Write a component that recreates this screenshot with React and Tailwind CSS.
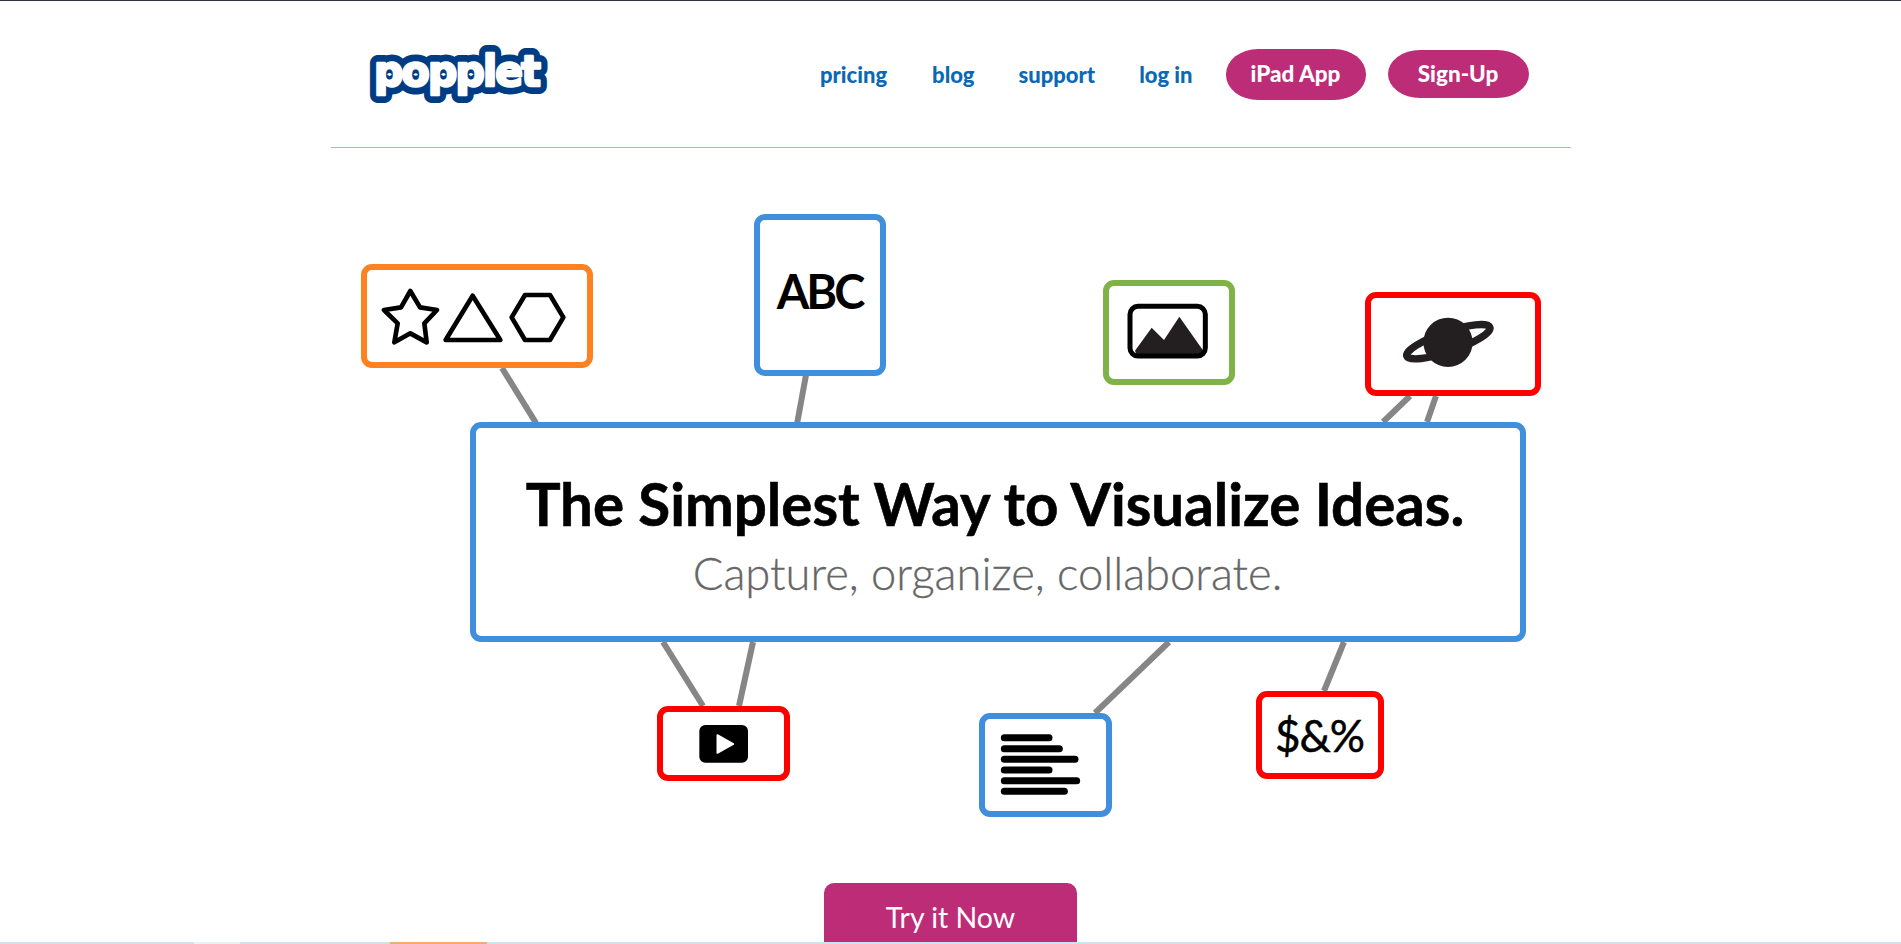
export default function App() {
    const navLink = "text-[#0a68b4] text-[22px] font-black";
    const pinkBtn = "flex items-center justify-center bg-[#bd2c77] text-white text-[22.5px] font-black";

    return (
        <div className="relative h-screen overflow-hidden bg-white border-t border-[#2b3240] font-['Lato',sans-serif]">
            <header className="w-[1240px] h-[147px] mx-auto flex items-center border-b border-[#8fc2d9]">
                <svg className="ml-[34px] w-[190px] h-[66px] font-['DejaVu_Sans',sans-serif] font-bold text-[41px] tracking-[-1.8px]" viewBox="0 0 190 66">
                    <g transform="translate(0 45) scale(1 1.06) translate(0 -45)">
                        <text x="9" y="45" fill="#003c83" stroke="#003c83" strokeWidth="15" strokeLinejoin="round">popplet</text>
                        <text x="9" y="45" fill="#fff" stroke="#fff" strokeWidth="2.5" strokeLinejoin="round">popplet</text>
                    </g>
                </svg>
                <nav className="flex items-center ml-auto mr-[42px]">
                    <a className={navLink}>pricing</a>
                    <a className={`${navLink} ml-[45px]`}>blog</a>
                    <a className={`${navLink} ml-[44px]`}>support</a>
                    <a className={`${navLink} ml-[44px]`}>log in</a>
                    <a className={`${pinkBtn} ml-[33px] w-[140px] h-[51px] rounded-[32px/25px]`}>iPad App</a>
                    <a className={`${pinkBtn} ml-[22px] w-[141px] h-[48px] rounded-[32px/24px]`}>Sign-Up</a>
                </nav>
            </header>

            <div className="relative w-[1240px] h-[735px] mx-auto">
                <svg className="absolute inset-0 w-full h-full" viewBox="0 0 1240 735" fill="none" stroke="#868686" strokeWidth="6">
                    <path d="M171 220L205 275" />
                    <path d="M475 227L466 276" />
                    <path d="M1079 248L1052 274" />
                    <path d="M1105 248L1096 274" />
                    <path d="M332 494L372 558" />
                    <path d="M422 494L408 558" />
                    <path d="M838 494L764 565" />
                    <path d="M1013 494L993 543" />
                </svg>

                {/* shapes */}
                <div className="absolute left-[30px] top-[116px] w-[232px] h-[104px] bg-white border-[6px] border-[#fe8122] rounded-[11px]">
                    <svg className="absolute left-[14px] top-[18px] w-[185px] h-[57px]" viewBox="78 99 555 171" fill="none" stroke="#000" strokeWidth="14" strokeLinejoin="round">
                        <path d="M166 108L195 157L246 165L208 205L215 262L166 235L118 262L128 205L87 165L138 157Z" />
                        <path d="M353 122L436 255L272 255Z" />
                        <path d="M510 120L585 120L625 187L585 255L510 255L470 187Z" />
                    </svg>
                </div>

                {/* text */}
                <div className="absolute left-[423px] top-[66px] w-[132px] h-[162px] bg-white border-[6px] border-[#408fdc] rounded-[11px] flex justify-center pt-[48px] text-[47px] leading-none font-bold tracking-[-3px] text-black">
                    ABC
                </div>

                {/* image */}
                <div className="absolute left-[772px] top-[132px] w-[132px] h-[105px] bg-white border-[6px] border-[#7fb247] rounded-[11px]">
                    <svg className="absolute left-[18px] top-[17px] w-[81px] h-[56px]" viewBox="141 129 243 168">
                        <path d="M165 272L215 203L252 240L298 170L372 275L360 285L170 285Z" fill="#231f20" />
                        <rect x="150" y="139" width="226" height="149" rx="24" fill="none" stroke="#000" strokeWidth="15" />
                    </svg>
                </div>

                {/* planet */}
                <div className="absolute left-[1034px] top-[144px] w-[176px] h-[104px] bg-white border-[6px] border-[#ff0000] rounded-[11px]">
                    <svg className="absolute left-[27px] top-[17px] w-[100px] h-[55px]" viewBox="954 165 300 165">
                        <ellipse cx="1105" cy="245" rx="132" ry="30" fill="none" stroke="#231f20" strokeWidth="22" transform="rotate(-19 1105 245)" />
                        <circle cx="1104" cy="247" r="74" fill="#231f20" />
                    </svg>
                </div>

                {/* main box */}
                <div className="absolute left-[139px] top-[274px] w-[1056px] h-[220px] bg-white border-[6px] border-[#408fdc] rounded-[11px] flex flex-col items-center pt-[46px]">
                    <h1 className="mr-[5px] text-[58.3px] leading-[58px] font-bold text-black [-webkit-text-stroke:0.6px_#000]">The Simplest Way to Visualize Ideas.</h1>
                    <p className="mt-[18px] mr-[20px] text-[45.3px] leading-none font-light text-[#666] [-webkit-text-stroke:0.3px_#666]">Capture, organize, collaborate.</p>
                </div>

                {/* video */}
                <div className="absolute left-[326px] top-[558px] w-[133px] h-[75px] bg-white border-[6px] border-[#ff0000] rounded-[11px]">
                    <svg className="absolute left-[36px] top-[13px] w-[49px] h-[38px]" viewBox="207 285 147 114">
                        <rect x="208" y="285" width="146" height="113" rx="18" fill="#000" />
                        <path d="M262 315L310 342L262 369Z" fill="#fff" stroke="#fff" strokeWidth="5" strokeLinejoin="round" />
                    </svg>
                </div>

                {/* lines of text */}
                <div className="absolute left-[648px] top-[565px] w-[133px] h-[104px] bg-white border-[6px] border-[#408fdc] rounded-[11px]">
                    <svg className="absolute left-[15px] top-[15px] w-[81px] h-[61px]" viewBox="1110 312 243 183" fill="none" stroke="#000" strokeWidth="21" strokeLinecap="round">
                        <path d="M1123 323H1257" />
                        <path d="M1123 356H1288" />
                        <path d="M1123 388H1335" />
                        <path d="M1123 420H1257" />
                        <path d="M1123 452H1340" />
                        <path d="M1123 484H1303" />
                    </svg>
                </div>

                {/* symbols */}
                <div className="absolute left-[925px] top-[543px] w-[128px] h-[88px] bg-white border-[6px] border-[#ff0000] rounded-[11px] flex items-center justify-center text-[44px] leading-none tracking-[-1px] text-black [-webkit-text-stroke:0.5px_#000]">
                    $&amp;%
                </div>
            </div>

            <a className="w-[253px] h-[70px] pb-[2px] mx-auto flex items-center justify-center bg-[#bd2c77] rounded-t-[10px] text-white text-[28.5px]">
                Try it Now
            </a>

            <div className="absolute bottom-0 inset-x-0 h-[2px] flex bg-[#cfe3ec]">
                <div className="ml-[194px] w-[46px] bg-[#e8f2f6]" />
                <div className="ml-[150px] w-[97px] bg-[#f4ab6e]" />
            </div>
        </div>
    );
}
